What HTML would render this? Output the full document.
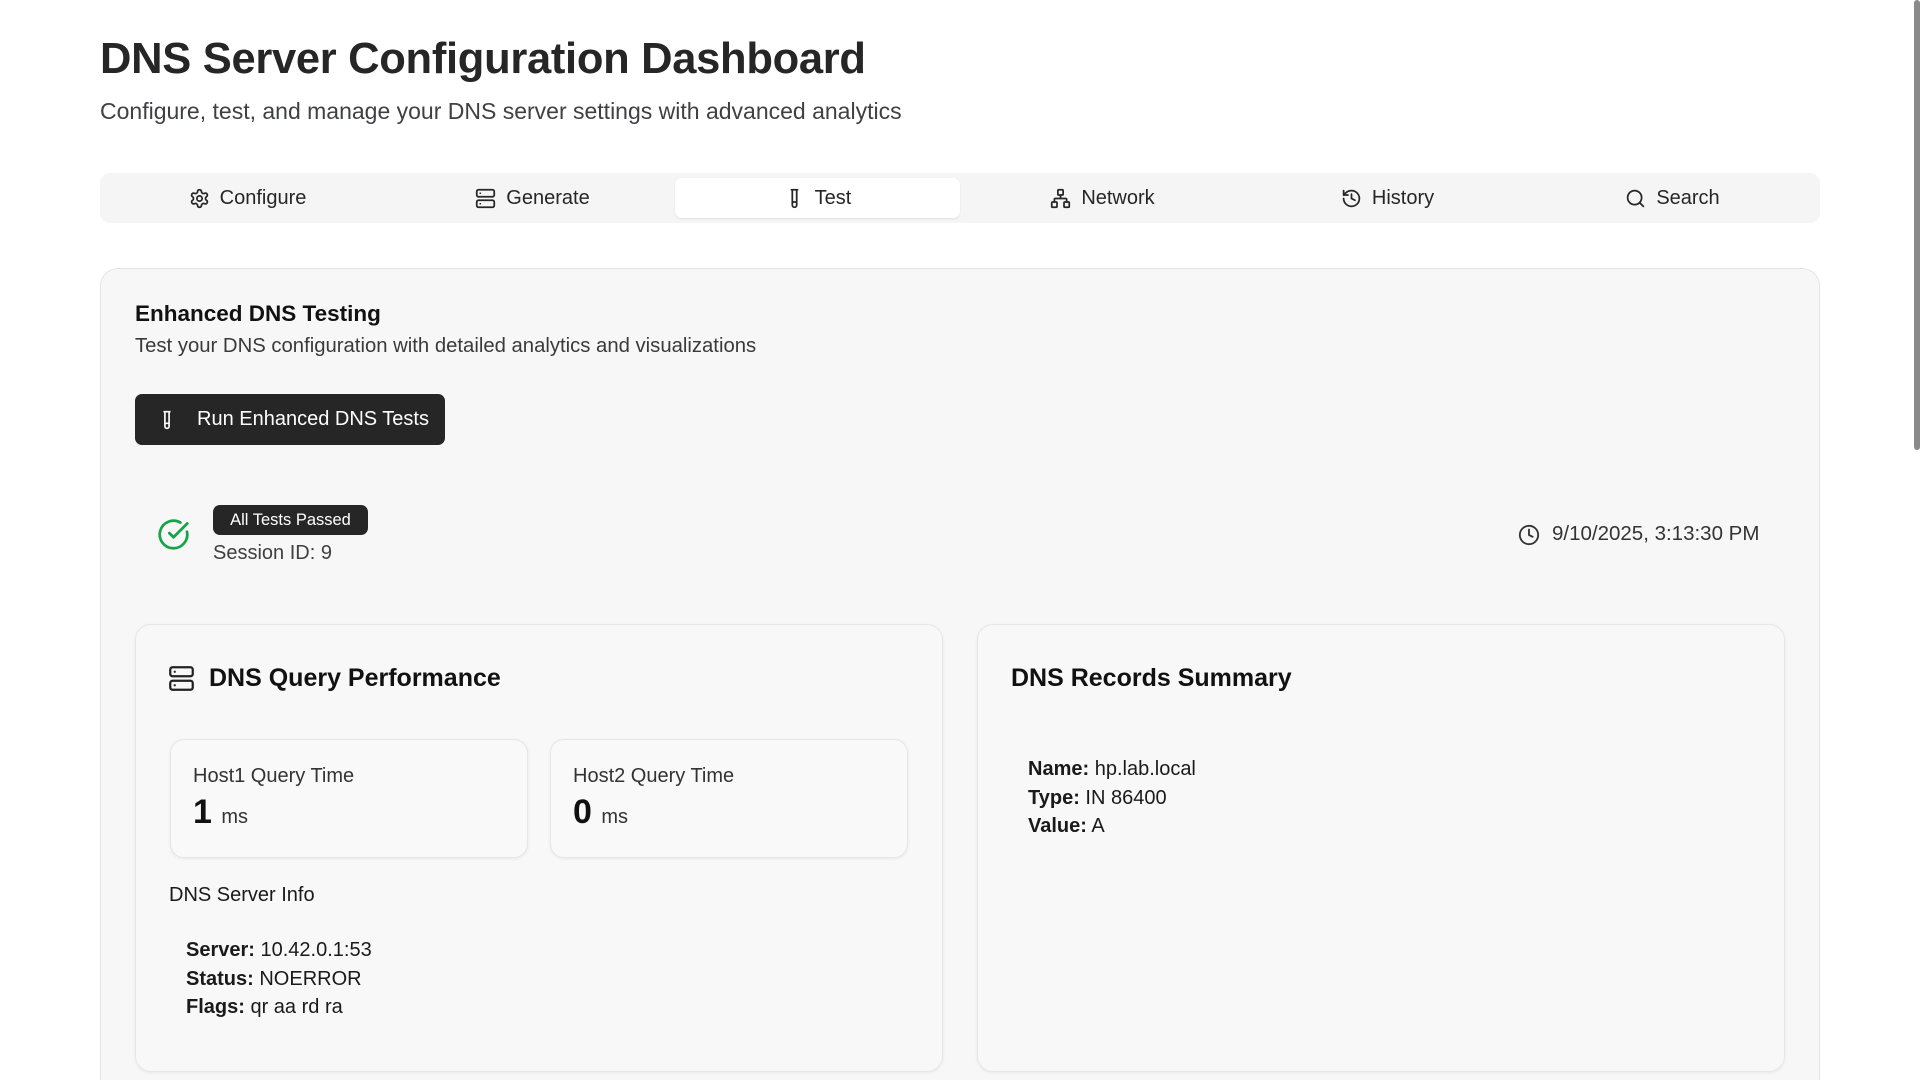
<!DOCTYPE html>
<html><head><meta charset="utf-8"><style>
*{box-sizing:border-box;margin:0;padding:0}
html,body{width:1920px;height:1080px;overflow:hidden;background:#fff;font-family:"Liberation Sans",sans-serif;color:#171717}
#wrap{position:relative;width:1920px;height:1080px;overflow:hidden}
.abs{position:absolute}
svg{fill:none;stroke:currentColor;stroke-width:2;stroke-linecap:round;stroke-linejoin:round}
h1{position:absolute;left:100px;top:35px;font-size:43.5px;font-weight:700;color:#262626;letter-spacing:-0.3px}
.sub{position:absolute;left:100px;top:98px;font-size:23px;color:#3f3f46}
.tabs{position:absolute;left:100px;top:173px;width:1720px;height:50px;background:#f5f5f5;border-radius:10px}
.tab{position:absolute;top:5px;width:285px;height:40px;display:flex;align-items:center;justify-content:center;gap:10px;font-size:20px;color:#262626}
.tab svg{width:21px;height:21px}
.tab.act{background:#fff;border-radius:7px;box-shadow:0 1px 2px rgba(0,0,0,.08)}
.card{position:absolute;left:100px;top:268px;width:1720px;height:840px;background:#f7f7f7;border:1.5px solid #e4e4e4;border-radius:18px}
.sc{position:absolute;top:624px;width:808px;height:448px;background:#f8f8f8;border:1.5px solid #e6e6e6;border-radius:16px;box-shadow:0 1px 3px rgba(0,0,0,.06)}
.hb{position:absolute;top:739px;width:358px;height:119px;background:#f9f9f9;border:1.5px solid #e6e6e6;border-radius:14px;box-shadow:0 1px 3px rgba(0,0,0,.07)}
.lbl{font-size:20px;color:#333}
.kv{position:absolute;font-size:20px;line-height:28.5px;color:#1a1a1a}
.kv b{font-weight:700}
</style></head><body><div id="wrap">
<h1>DNS Server Configuration Dashboard</h1>
<div class="sub">Configure, test, and manage your DNS server settings with advanced analytics</div>
<div class="tabs">
 <div class="tab" style="left:5px"><svg viewBox="0 0 24 24"><path d="M12.22 2h-.44a2 2 0 0 0-2 2v.18a2 2 0 0 1-1 1.73l-.43.25a2 2 0 0 1-2 0l-.15-.08a2 2 0 0 0-2.73.73l-.22.38a2 2 0 0 0 .73 2.73l.15.1a2 2 0 0 1 1 1.72v.51a2 2 0 0 1-1 1.74l-.15.09a2 2 0 0 0-.73 2.73l.22.38a2 2 0 0 0 2.73.73l.15-.08a2 2 0 0 1 2 0l.43.25a2 2 0 0 1 1 1.73V20a2 2 0 0 0 2 2h.44a2 2 0 0 0 2-2v-.18a2 2 0 0 1 1-1.73l.43-.25a2 2 0 0 1 2 0l.15.08a2 2 0 0 0 2.73-.73l.22-.39a2 2 0 0 0-.73-2.73l-.15-.08a2 2 0 0 1-1-1.74v-.5a2 2 0 0 1 1-1.74l.15-.09a2 2 0 0 0 .73-2.73l-.22-.38a2 2 0 0 0-2.73-.73l-.15.08a2 2 0 0 1-2 0l-.43-.25a2 2 0 0 1-1-1.73V4a2 2 0 0 0-2-2z"/><circle cx="12" cy="12" r="3"/></svg>Configure</div>
 <div class="tab" style="left:290px"><svg viewBox="0 0 24 24"><rect x="2" y="2" width="20" height="8" rx="2"/><rect x="2" y="14" width="20" height="8" rx="2"/><path d="M6 6h.01M6 18h.01"/></svg>Generate</div>
 <div class="tab act" style="left:575px"><svg viewBox="0 0 24 24"><path d="M14.5 2v17.5c0 1.4-1.1 2.5-2.5 2.5s-2.5-1.1-2.5-2.5V2M8.5 2h7M14.5 16h-5"/></svg>Test</div>
 <div class="tab" style="left:860px"><svg viewBox="0 0 24 24"><rect x="16" y="16" width="6" height="6" rx="1"/><rect x="2" y="16" width="6" height="6" rx="1"/><rect x="9" y="2" width="6" height="6" rx="1"/><path d="M5 16v-3a1 1 0 0 1 1-1h12a1 1 0 0 1 1 1v3M12 12V8"/></svg>Network</div>
 <div class="tab" style="left:1145px"><svg viewBox="0 0 24 24"><path d="M3 12a9 9 0 1 0 9-9 9.75 9.75 0 0 0-6.74 2.74L3 8"/><path d="M3 3v5h5M12 7v5l4 2"/></svg>History</div>
 <div class="tab" style="left:1430px"><svg viewBox="0 0 24 24"><circle cx="11" cy="11" r="8"/><path d="m21 21-4.3-4.3"/></svg>Search</div>
</div>
<div class="card"></div>
<div class="abs" style="left:135px;top:301px;font-size:22.5px;font-weight:700;color:#111">Enhanced DNS Testing</div>
<div class="abs" style="left:135px;top:335px;font-size:20.3px;color:#3a3a3a">Test your DNS configuration with detailed analytics and visualizations</div>
<div class="abs" style="left:135px;top:394px;width:310px;height:51px;background:#262626;border-radius:7px;color:#fff;font-size:20px;display:flex;align-items:center;padding-left:22px;gap:20px"><svg viewBox="0 0 24 24" style="width:20px;height:20px"><path d="M14.5 2v17.5c0 1.4-1.1 2.5-2.5 2.5s-2.5-1.1-2.5-2.5V2M8.5 2h7M14.5 16h-5"/></svg>Run Enhanced DNS Tests</div>
<svg class="abs" viewBox="0 0 24 24" style="left:157px;top:518px;width:33px;height:33px;color:#16a34a"><path d="M21.8 10A10 10 0 1 1 17 3.34"/><path d="m9 11 3 3L22 4"/></svg>
<div class="abs" style="left:213px;top:505px;width:155px;height:30px;background:#262626;border-radius:7px;color:#fff;font-size:16.5px;display:flex;align-items:center;justify-content:center">All Tests Passed</div>
<div class="abs" style="left:213px;top:542px;font-size:20px;color:#3f3f3f">Session ID: 9</div>
<svg class="abs" viewBox="0 0 24 24" style="left:1518px;top:524px;width:22px;height:22px;color:#333"><circle cx="12" cy="12" r="10"/><path d="M12 6v6l4 2"/></svg>
<div class="abs" style="left:1552px;top:522px;font-size:20.5px;color:#333">9/10/2025, 3:13:30 PM</div>

<div class="sc" style="left:135px"></div>
<div class="sc" style="left:977px"></div>
<svg class="abs" viewBox="0 0 24 24" style="left:168px;top:665px;width:27px;height:27px;color:#222"><rect x="2" y="2" width="20" height="8" rx="2"/><rect x="2" y="14" width="20" height="8" rx="2"/><path d="M6 6h.01M6 18h.01"/></svg>
<div class="abs" style="left:209px;top:664px;font-size:25px;font-weight:700;color:#111">DNS Query Performance</div>
<div class="abs" style="left:1011px;top:664px;font-size:25px;font-weight:700;color:#111">DNS Records Summary</div>
<div class="hb" style="left:170px"></div>
<div class="hb" style="left:550px"></div>
<div class="abs lbl" style="left:193px;top:765px">Host1 Query Time</div>
<div class="abs lbl" style="left:573px;top:765px">Host2 Query Time</div>
<div class="abs" style="left:193px;top:793px;font-size:34px;font-weight:700;color:#111">1 <span style="font-size:20px;font-weight:400;color:#333">ms</span></div>
<div class="abs" style="left:573px;top:793px;font-size:34px;font-weight:700;color:#111">0 <span style="font-size:20px;font-weight:400;color:#333">ms</span></div>
<div class="abs" style="left:169px;top:884px;font-size:20px;color:#1a1a1a">DNS Server Info</div>
<div class="kv" style="left:186px;top:936px"><b>Server:</b> 10.42.0.1:53<br><b>Status:</b> NOERROR<br><b>Flags:</b> qr aa rd ra</div>
<div class="kv" style="left:1028px;top:755px"><b>Name:</b> hp.lab.local<br><b>Type:</b> IN 86400<br><b>Value:</b> A</div>
<div class="abs" style="left:1914px;top:0;width:6px;height:450px;background:#8a8a8a;border-radius:3px"></div>
</div></body></html>
